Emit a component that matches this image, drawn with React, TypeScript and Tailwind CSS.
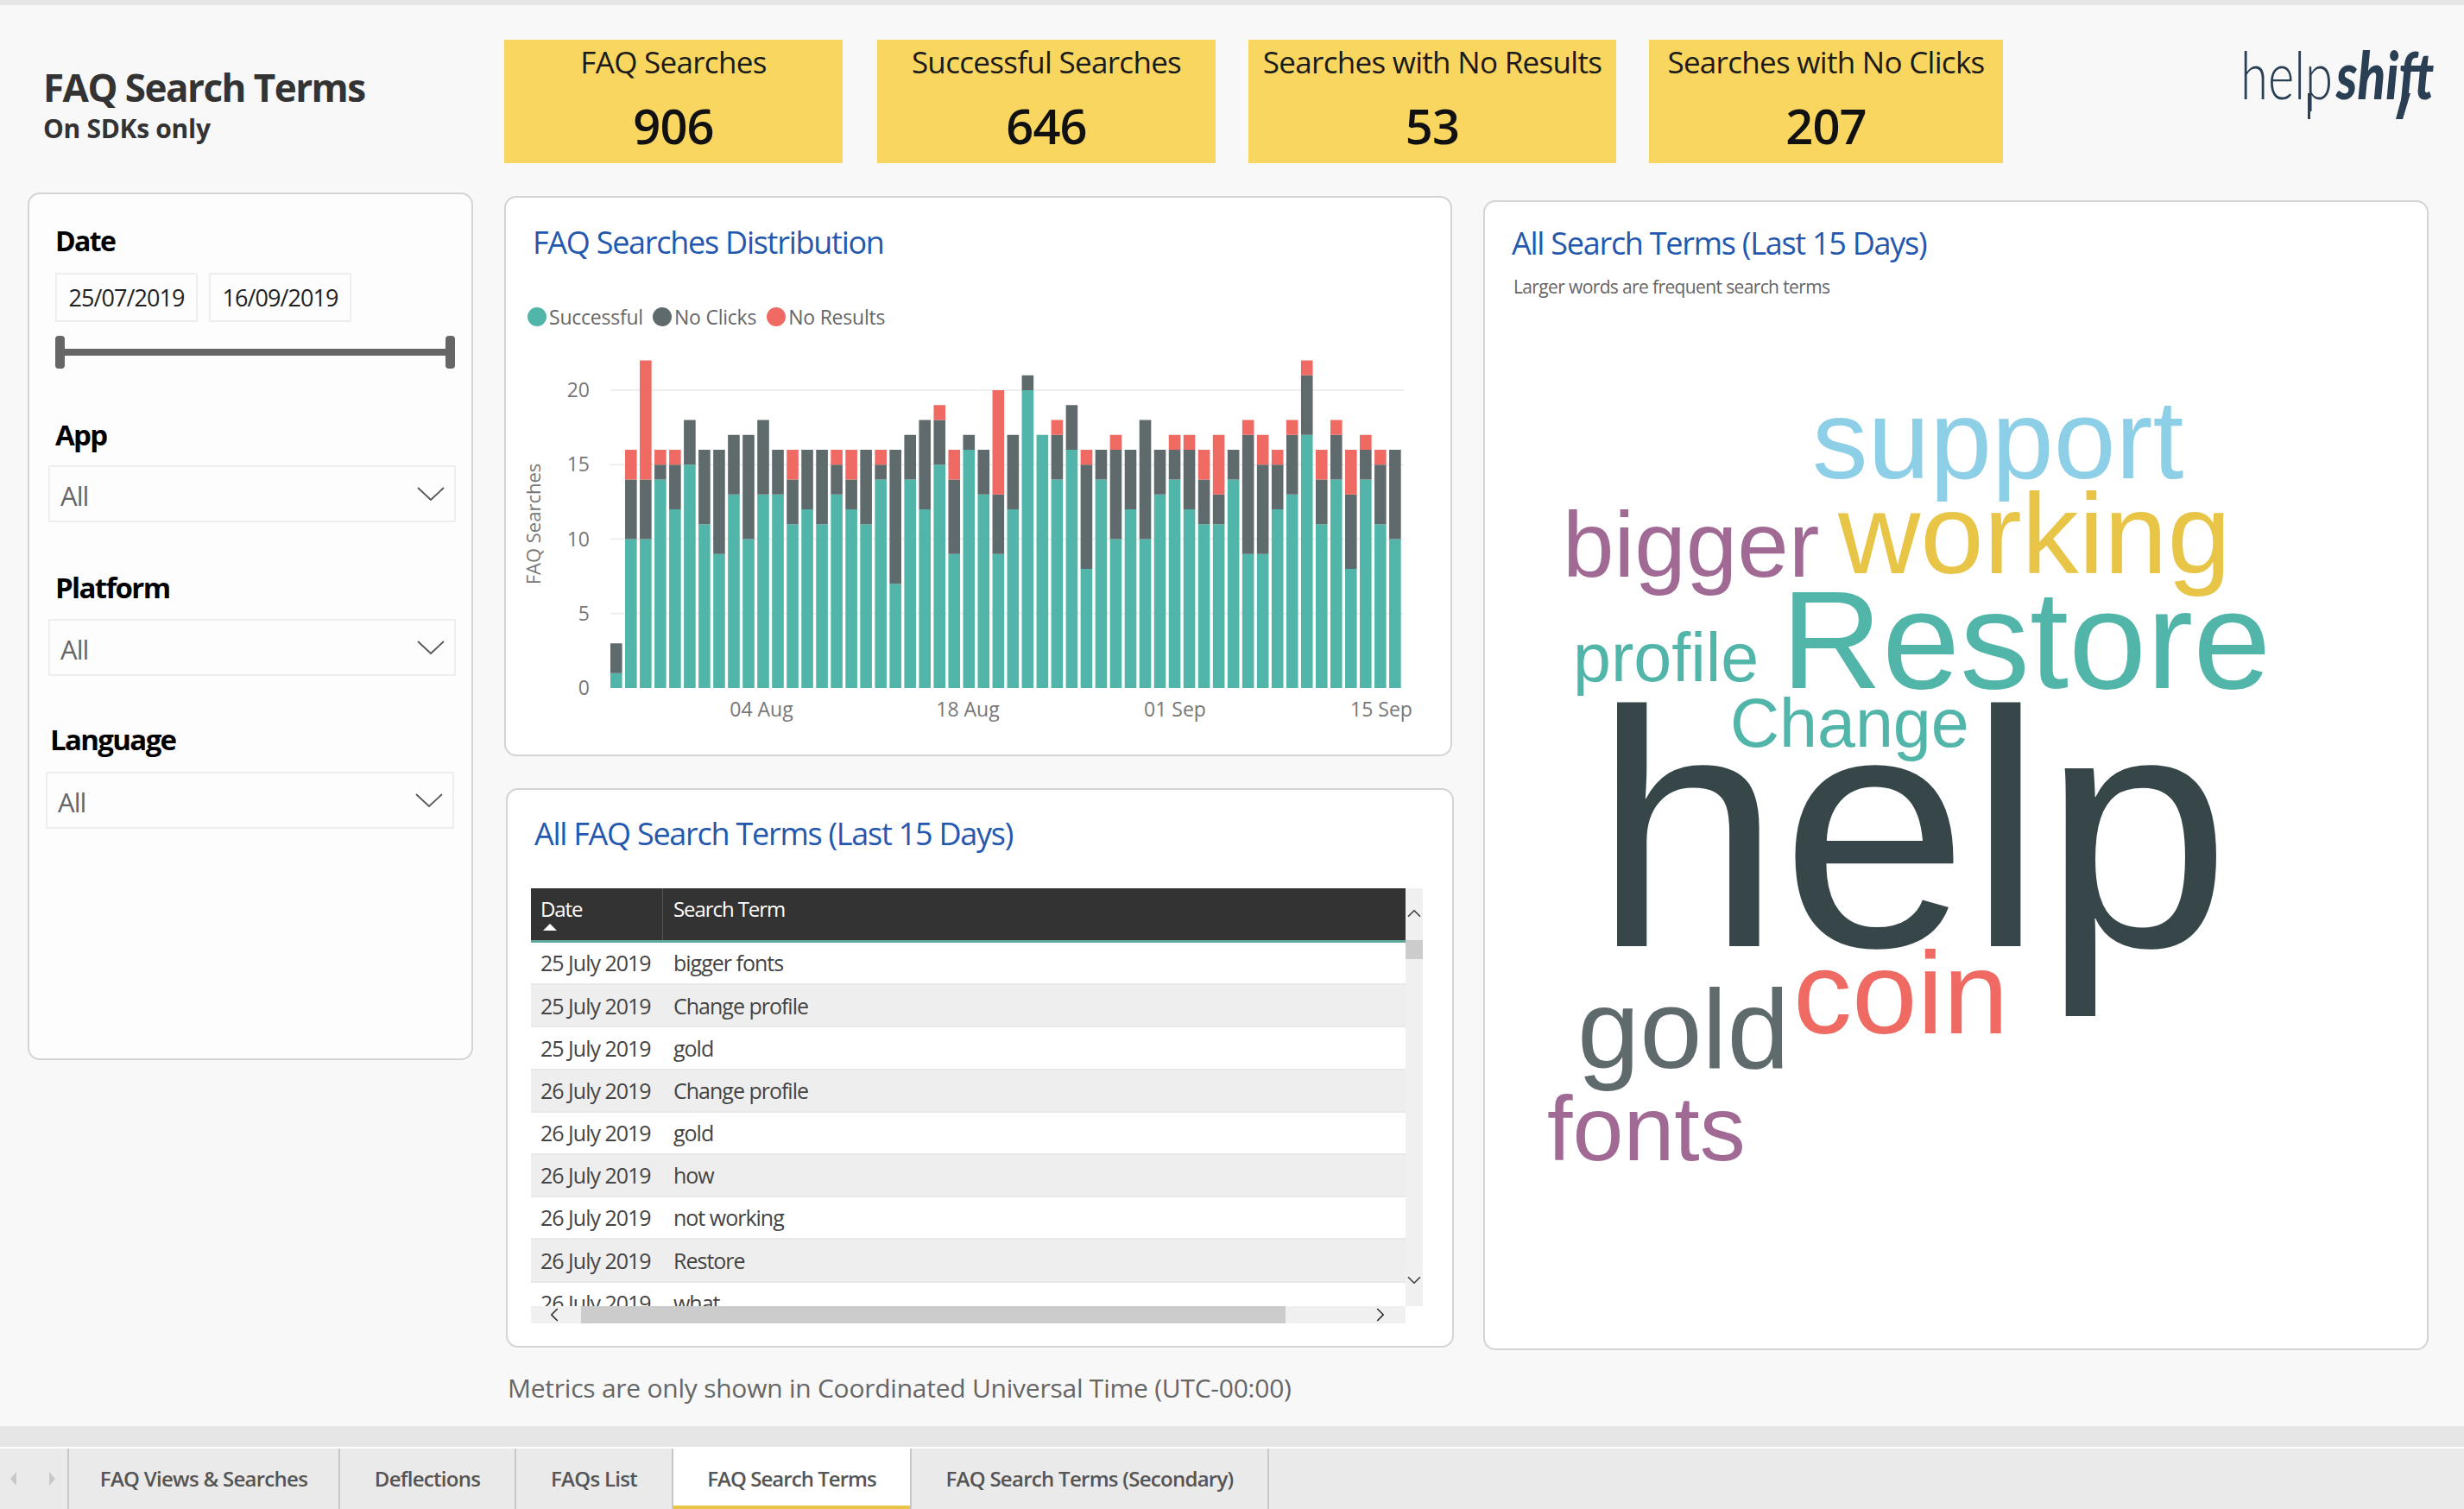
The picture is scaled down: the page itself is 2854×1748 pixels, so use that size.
import React from "react";
import { ChevronUp, ChevronDown, ChevronLeft, ChevronRight } from "lucide-react";

const bars: [number, number, number][] = [
  [1,2,0],[10,4,2],[10,4,8],[14,1,1],[12,3,1],[15,3,0],[11,5,0],[9,7,0],[13,4,0],[10,7,0],
  [13,5,0],[13,3,0],[11,3,2],[12,4,0],[11,5,0],[13,2,1],[12,2,2],[11,5,0],[14,1,1],[7,9,0],
  [14,3,0],[12,6,0],[15,3,1],[9,5,2],[16,1,0],[13,3,0],[9,4,7],[12,5,0],[20,1,0],[17,0,0],
  [14,3,1],[16,3,0],[8,7,1],[14,2,0],[10,6,1],[12,4,0],[10,8,0],[13,3,0],[14,2,1],[12,4,1],
  [11,3,2],[11,2,4],[14,2,0],[9,8,1],[9,6,2],[12,3,1],[13,4,1],[17,4,1],[11,3,2],[14,3,1],
  [8,5,3],[14,2,1],[11,4,1],[10,6,0],
];

const rows = [
  ["25 July 2019", "bigger fonts"],
  ["25 July 2019", "Change profile"],
  ["25 July 2019", "gold"],
  ["26 July 2019", "Change profile"],
  ["26 July 2019", "gold"],
  ["26 July 2019", "how"],
  ["26 July 2019", "not working"],
  ["26 July 2019", "Restore"],
  ["26 July 2019", "what"],
];

function Kpi({ label, value, cls }: { label: string; value: string; cls: string }) {
  return (
    <div className={`${cls} h-[143px] bg-[#f9d65f] flex flex-col items-center shrink-0`}>
      <div className="mt-[2px] text-[35px] leading-[48px] tracking-[-0.02em] text-[#1a1a1a] whitespace-nowrap">{label}</div>
      <div className="mt-[17px] text-[56px] leading-[64px] font-semibold tracking-[-0.015em] text-[#111]">{value}</div>
    </div>
  );
}

function FilterSelect({ cls }: { cls: string }) {
  return (
    <div className={`${cls} flex items-center justify-between h-[66px] border-2 border-[#eeeeee] bg-[#fdfdfd] pl-[12px] pr-[10px]`}>
      <span className="mt-[4px] text-[31px] text-[#666666] tracking-[-0.03em]">All</span>
      <svg width="34" height="18" viewBox="0 0 34 18" fill="none" stroke="#555" strokeWidth="1.8">
        <path d="M2 2 L17 16 L32 2" />
      </svg>
    </div>
  );
}

function Chart() {
  const x0 = 121, pitch = 17.02, bw = 13.6, y0 = 568, u = 17.25;
  return (
    <svg width="1093" height="620" viewBox="0 0 1093 620" className="absolute left-0 top-[0px]" fontFamily="'Open Sans', sans-serif">
      {[0, 5, 10, 15, 20].map((v) => (
        <g key={v}>
          {v > 0 && <rect x={x0} y={y0 - v * u - 1} width={919} height={2} fill="#eeeeee" />}
          <text x={97} y={y0 - v * u + 8} textAnchor="end" fontSize="23" fill="#777777">{v}</text>
        </g>
      ))}
      {bars.map(([s, n, r], i) => {
        const x = x0 + i * pitch;
        return (
          <g key={i}>
            <rect x={x} y={y0 - s * u} width={bw} height={s * u} fill="#51b5a9" />
            {n > 0 && <rect x={x} y={y0 - (s + n) * u} width={bw} height={n * u} fill="#5f6a6d" />}
            {r > 0 && <rect x={x} y={y0 - (s + n + r) * u} width={bw} height={r * u} fill="#ee6a62" />}
          </g>
        );
      })}
      {[["04 Aug", 296], ["18 Aug", 535], ["01 Sep", 775], ["15 Sep", 1014]].map(([t, x]) => (
        <text key={t as string} x={x as number} y={601} textAnchor="middle" fontSize="23" fill="#777777">{t}</text>
      ))}
      <text transform="translate(40,378) rotate(-90)" textAnchor="middle" fontSize="22" fill="#777777">FAQ Searches</text>
    </svg>
  );
}

function Tab({ cls, label, active }: { cls: string; label: string; active?: boolean }) {
  return (
    <div className={`${cls} h-full flex items-center justify-center border-r-2 border-[#c8c8c8] relative ${active ? "bg-white" : ""}`}>
      <span className={`text-[24px] font-semibold text-[#555555] whitespace-nowrap ${active ? "tracking-[-0.04em]" : "tracking-[-0.03em]"}`}>{label}</span>
      {active && <div className="absolute left-0 right-0 bottom-0 h-[4px] bg-[#e8c547]" />}
    </div>
  );
}

export default function App() {
  return (
    <div className="w-[2854px] h-[1748px] overflow-hidden flex flex-col bg-[#f8f8f8] font-['Open_Sans',sans-serif]">
      <div className="h-[6px] bg-[#e6e6e6] shrink-0" />

      {/* Header row */}
      <div className="h-[217px] shrink-0 flex items-start pl-[50px] pt-[40px]">
        <div className="w-[534px] shrink-0 pt-[30px]">
          <div className="text-[44px] leading-[50px] font-bold tracking-[-0.035em] text-[#333333]">FAQ Search Terms</div>
          <div className="mt-[3px] text-[30px] leading-[40px] font-bold tracking-[-0.01em] text-[#333333]">On SDKs only</div>
        </div>
        <Kpi cls="w-[392px]" label="FAQ Searches" value="906" />
        <Kpi cls="w-[392px] ml-[40px]" label="Successful Searches" value="646" />
        <Kpi cls="w-[426px] ml-[38px]" label="Searches with No Results" value="53" />
        <Kpi cls="w-[410px] ml-[38px]" label="Searches with No Clicks" value="207" />
        <svg width="226" height="82" viewBox="0 0 226 82" className="ml-[275px] mt-[12px] shrink-0" fill="#2b3f54">
          <text x="0" y="57" fontFamily="Lato, sans-serif" fontSize="76" fontWeight="300" textLength="107" lengthAdjust="spacingAndGlyphs">help</text>
          <text x="111" y="57" fontFamily="Lato, sans-serif" fontSize="76" fontWeight="900" fontStyle="italic" textLength="113" lengthAdjust="spacingAndGlyphs">shift</text>
          <rect x="78" y="50" width="3" height="30" />
          <path d="M188 50 L197 50 L188 80 L180 80 Z" />
        </svg>
      </div>

      {/* Body row */}
      <div className="flex-1 flex items-start pl-[32px]">
        {/* Filters */}
        <div className="w-[516px] h-[1005px] shrink-0 rounded-[14px] border-2 border-[#d4d4d4] bg-[#fdfdfd] pl-[19px] pt-[32px] text-black">
          <div className="ml-[11px] text-[32px] leading-[44px] font-bold tracking-[-0.05em]">Date</div>
          <div className="ml-[11px] flex gap-[13px] mt-[15px]">
            {["25/07/2019", "16/09/2019"].map((d) => (
              <div key={d} className="w-[165px] h-[57px] border-2 border-[#eeeeee] flex items-center justify-center pt-[2px] text-[27px] tracking-[-0.035em] text-[#222]">{d}</div>
            ))}
          </div>
          <div className="ml-[11px] relative w-[463px] h-[38px] mt-[16px]">
            <div className="absolute left-0 right-0 top-[15px] h-[8px] bg-[#666666]" />
            <div className="absolute left-0 top-0 w-[11px] h-[38px] rounded-[4px] bg-[#666666]" />
            <div className="absolute right-0 top-0 w-[11px] h-[38px] rounded-[4px] bg-[#666666]" />
          </div>
          <div className="ml-[11px] text-[33px] leading-[44px] font-bold tracking-[-0.05em] mt-[55px]">App</div>
          <FilterSelect cls="w-[472px] ml-[3px] mt-[13px]" />
          <div className="ml-[11px] text-[33px] leading-[44px] font-bold tracking-[-0.05em] mt-[54px]">Platform</div>
          <FilterSelect cls="w-[472px] ml-[3px] mt-[14px]" />
          <div className="ml-[5px] text-[33px] leading-[44px] font-bold tracking-[-0.05em] mt-[52px]">Language</div>
          <FilterSelect cls="w-[473px] mt-[15px]" />
        </div>

        {/* Middle column */}
        <div className="w-[1100px] ml-[36px] shrink-0 mt-[4px] flex flex-col">
          <div className="w-[1098px] h-[649px] relative rounded-[14px] border-2 border-[#d4d4d4] bg-white">
            <Chart />
            <div className="absolute left-[31px] top-[27px] text-[36px] leading-[50px] tracking-[-0.035em] text-[#2458ae]">FAQ Searches Distribution</div>
            <div className="absolute left-[25px] top-[122px] flex items-center text-[23px] leading-[32px] tracking-[-0.01em] text-[#666666]">
              <span className="w-[22px] h-[22px] rounded-full bg-[#51b5a9] mr-[3px]" />
              <span>Successful</span>
              <span className="w-[22px] h-[22px] rounded-full bg-[#5f6a6d] ml-[11px] mr-[3px]" />
              <span>No Clicks</span>
              <span className="w-[22px] h-[22px] rounded-full bg-[#ee6a62] ml-[12px] mr-[3px]" />
              <span>No Results</span>
            </div>
          </div>

          <div className="w-[1098px] h-[648px] mt-[37px] ml-[2px] rounded-[14px] border-2 border-[#d4d4d4] bg-white pl-[27px] pt-[26px]">
            <div className="text-[36px] leading-[50px] tracking-[-0.035em] text-[#2458ae] ml-[4px]">All FAQ Search Terms (Last 15 Days)</div>
            <div className="mt-[38px] w-[1033px]">
              <div className="flex h-[484px]">
                <div className="w-[1013px] overflow-hidden">
                  <div className="flex h-[60px] bg-[#333333] text-white text-[24px] tracking-[-0.045em]">
                    <div className="w-[153px] border-r border-[#555] pl-[11px] pt-[9px] leading-[30px] relative">
                      Date
                      <div className="absolute left-[14px] top-[41px] w-0 h-0 border-l-[8px] border-r-[8px] border-b-[8px] border-l-transparent border-r-transparent border-b-white" />
                    </div>
                    <div className="pl-[12px] pt-[9px] leading-[30px]">Search Term</div>
                  </div>
                  <div className="h-[3px] bg-[#5fa89b]" />
                  {rows.map(([d, t], i) => (
                    <div key={i} className={`flex h-[49.2px] items-center pt-[1px] border-b-2 border-[#e8e8e8] text-[25px] tracking-[-0.04em] text-[#444444] ${i % 2 === 1 ? "bg-[#eeeeee]" : "bg-white"}`}>
                      <div className="w-[165px] pl-[11px] whitespace-nowrap">{d}</div>
                      <div>{t}</div>
                    </div>
                  ))}
                </div>
                <div className="w-[20px] bg-[#f0f0f0] relative">
                  <ChevronUp size={26} strokeWidth={1.6} color="#444" className="absolute left-[-3px] top-[16px]" />
                  <div className="absolute left-0 right-0 top-[60px] h-[22px] bg-[#cccccc]" />
                  <ChevronDown size={26} strokeWidth={1.6} color="#444" className="absolute left-[-3px] top-[441px]" />
                </div>
              </div>
              <div className="w-[1013px] h-[20px] bg-[#f0f0f0] flex items-center relative">
                <ChevronLeft size={26} strokeWidth={1.6} color="#333" className="absolute left-[14px] top-[-3px]" />
                <div className="ml-[58px] w-[816px] h-full bg-[#cccccc]" />
                <ChevronRight size={26} strokeWidth={1.6} color="#333" className="absolute left-[971px] top-[-3px]" />
              </div>
            </div>
          </div>

          <div className="ml-[4px] mt-[27px] text-[30px] leading-[40px] tracking-[-0.008em] text-[#666666] whitespace-nowrap">
            Metrics are only shown in Coordinated Universal Time (UTC-00:00)
          </div>
        </div>

        {/* Word cloud */}
        <div className="w-[1095px] h-[1332px] ml-[34px] mt-[9px] shrink-0 relative overflow-hidden rounded-[14px] border-2 border-[#d4d4d4] bg-white font-['Liberation_Sans',Arial,sans-serif]">
          <div className="ml-[31px] mt-[23px] text-[36px] leading-[50px] tracking-[-0.035em] text-[#2458ae] font-['Open_Sans',sans-serif]">All Search Terms (Last 15 Days)</div>
          <div className="ml-[33px] mt-[10px] text-[21px] leading-[30px] tracking-[-0.03em] text-[#666666] font-['Open_Sans',sans-serif]">Larger words are frequent search terms</div>
          <span className="absolute left-[379px] top-[211px] text-[129px] leading-none text-[#8ecfe8]">support</span>
          <span className="absolute left-[90px] top-[344px] text-[107px] leading-none text-[#a06a95]">bigger</span>
          <span className="absolute left-[409px] top-[319px] text-[132px] leading-none text-[#e8c547]">working</span>
          <span className="absolute left-[343px] top-[426px] text-[162px] leading-none text-[#51b5a9]">Restore</span>
          <span className="absolute left-[102px] top-[488px] text-[79px] leading-none text-[#51b5a9]">profile</span>
          <span className="absolute left-[284px] top-[564px] text-[79px] leading-none text-[#51b5a9]">Change</span>
          <span className="absolute left-[126px] top-[532px] text-[390px] leading-none text-[#374649]">help</span>
          <span className="absolute left-[357px] top-[848px] text-[136px] leading-none text-[#ee6a62]">coin</span>
          <span className="absolute left-[107px] top-[893px] text-[130px] leading-none text-[#5f6a6d]">gold</span>
          <span className="absolute left-[72px] top-[1020px] text-[106px] leading-none text-[#a06a95]">fonts</span>
        </div>
      </div>

      {/* Footer */}
      <div className="h-[24px] bg-[#e6e6e6] shrink-0" />
      <div className="h-[2px] bg-white shrink-0" />
      <div className="h-[70px] bg-[#eaeaea] shrink-0 flex items-stretch">
        <div className="w-[80px] h-full flex items-center justify-between pl-[12px] pr-[14px] border-r-2 border-[#c8c8c8]">
          <div className="w-0 h-0 border-y-[8px] border-r-[7px] border-y-transparent border-r-[#c8c8c8]" />
          <div className="w-0 h-0 border-y-[8px] border-l-[7px] border-y-transparent border-l-[#c8c8c8]" />
        </div>
        <Tab cls="w-[314px]" label="FAQ Views & Searches" />
        <Tab cls="w-[204px]" label="Deflections" />
        <Tab cls="w-[182px]" label="FAQs List" />
        <Tab cls="w-[276px]" label="FAQ Search Terms" active />
        <Tab cls="w-[414px]" label="FAQ Search Terms (Secondary)" />
      </div>
    </div>
  );
}
